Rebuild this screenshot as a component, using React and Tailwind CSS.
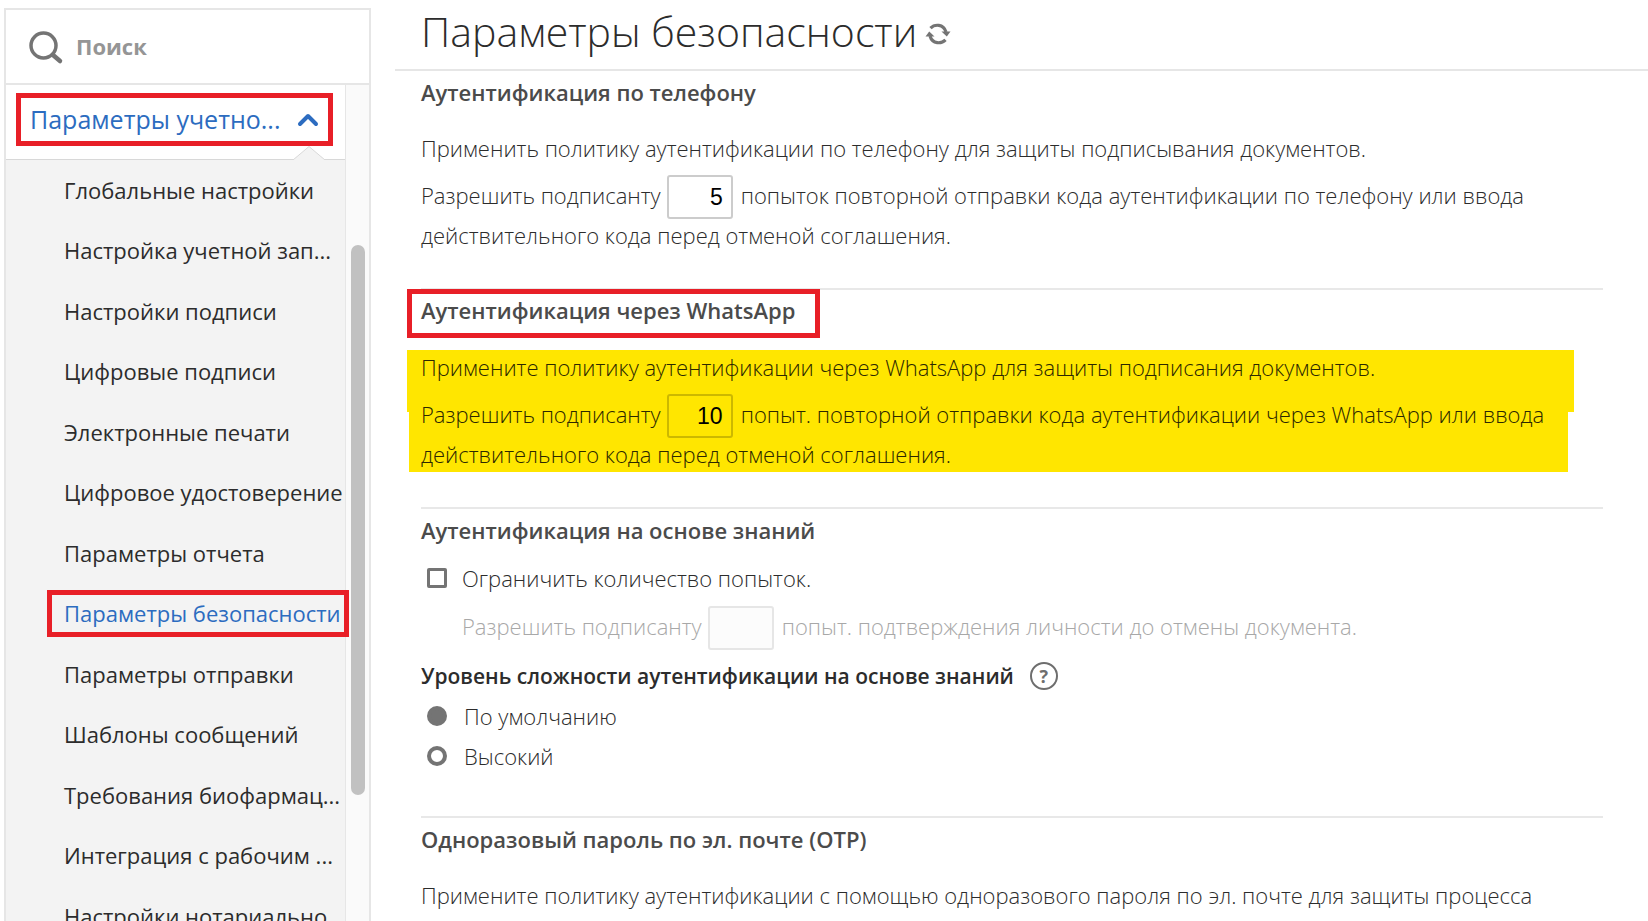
import React from 'react';
import { ChevronUp } from 'lucide-react';

const menuItems = [
  'Глобальные настройки',
  'Настройка учетной зап...',
  'Настройки подписи',
  'Цифровые подписи',
  'Электронные печати',
  'Цифровое удостоверение',
  'Параметры отчета',
  'Параметры безопасности',
  'Параметры отправки',
  'Шаблоны сообщений',
  'Требования биофармац...',
  'Интеграция с рабочим ...',
  'Настройки нотариально...',
];

const activeItem = 'Параметры безопасности';

const SearchIcon = () => (
  <svg className="size-9 shrink-0" viewBox="0 0 36 36" fill="none" stroke="#747474" aria-hidden="true">
    <circle cx="15.5" cy="16.5" r="12.5" strokeWidth="3.5" />
    <path d="M25 26 L32 32" strokeWidth="4.5" strokeLinecap="round" />
  </svg>
);

const RefreshIcon = () => (
  <svg className="h-[22px] w-[26px]" viewBox="0 0 26 22" fill="none" stroke="#747474" strokeWidth="3.2" aria-hidden="true">
    <path d="M5.5 5.2 C9.5 1 18.5 0.5 21 9" />
    <path d="M20.5 16.8 C16.5 21 7.5 21.5 5 13" />
    <path d="M16.5 8.5 L25.5 8.5 L21.8 13.5 Z" fill="#747474" stroke="none" />
    <path d="M9.5 13.5 L0.5 13.5 L4.2 8.5 Z" fill="#747474" stroke="none" />
  </svg>
);

const Sidebar = () => {
  return (
    <aside className="mt-2 ml-1 flex w-[367px] shrink-0 flex-col border-2 border-b-0 border-[#e6e6e6]">
      <label className="flex h-[75px] shrink-0 items-center gap-3 border-b-2 border-[#e6e6e6] pl-[22px]">
        <SearchIcon />
        <input
          type="search"
          aria-label="Поиск"
          placeholder="Поиск"
          className="w-full min-w-0 text-[22px] font-bold outline-none placeholder:text-[#959595]"
        />
      </label>

      <div className="flex min-h-0 flex-1">
        <nav className="min-w-0 flex-1 bg-[#f3f3f3]">
          <div className="relative h-[75px] border-b border-[#d8d8d8] bg-white pt-2 pl-[10px]">
            <button className="flex h-[53px] w-[317px] items-center justify-between border-[5px] border-[#e81f27] pr-1 pl-[9px] text-[25px] text-[#2c6cc0]">
              Параметры учетно...
              <ChevronUp className="size-8" strokeWidth={3} />
            </button>
            <svg className="absolute right-5 -bottom-px h-[14px] w-8" viewBox="0 0 32 14" aria-hidden="true">
              <path d="M0 14 L16 0.5 L32 14" fill="#f3f3f3" stroke="#d8d8d8" />
            </svg>
          </div>

          <ul className="text-[22px] text-[#2c2c2c]">
            {menuItems.map((item) => (
              <li key={item} className="flex h-[60px] items-center whitespace-nowrap even:h-[61px]">
                {item === activeItem ? (
                  <a
                    href="#"
                    aria-current="page"
                    className="relative ml-[41px] flex h-[47px] w-[302px] shrink-0 items-center border-[5px] border-[#e81f27] pl-3 text-[#2c6cc0]"
                  >
                    {item}
                  </a>
                ) : (
                  <a href="#" className="pl-[58px]">
                    {item}
                  </a>
                )}
              </li>
            ))}
          </ul>
        </nav>

        <div className="flex w-6 shrink-0 justify-center border-l border-[#e6e6e6] bg-[#fafafa] pt-40">
          <div className="h-[550px] w-[14px] rounded-full bg-[#c1c1c1]" />
        </div>
      </div>
    </aside>
  );
};

const Section = ({ title, marked, children }) => (
  <section className="relative border-b-2 border-[#e8e8e8] last:border-b-0">
    <h2 className="flex h-[41px] items-center text-[22px] font-semibold text-[#4b4b4b]">
      {marked ? (
        <span className="-mt-px -ml-[14px] flex h-[49px] items-center self-start border-[5px] border-[#e81f27] pr-5 pb-2 pl-[9px]">
          {title}
        </span>
      ) : (
        title
      )}
    </h2>
    {children}
  </section>
);

const CountInput = (props) => (
  <input
    type="text"
    className="-mt-1.5 mr-2 -mb-1 ml-1.5 h-11 w-[66px] rounded-[3px] border-2 border-black/20 bg-transparent pr-2 text-right align-middle font-['Liberation_Sans',sans-serif] text-[23px] font-normal text-black disabled:border-[#e6e6e6] disabled:bg-[#fcfcfc]"
    {...props}
  />
);

const radioClass = 'size-5 appearance-none rounded-full border-4 border-[#747474] checked:bg-[#747474]';

const App = () => {
  return (
    <div className="flex h-screen overflow-hidden bg-white font-['Open_Sans','Noto_Sans',sans-serif]">
      <Sidebar />

      <main className="ml-6 min-w-0 flex-1">
        <header className="flex h-[71px] items-center gap-2 border-b-2 border-[#e6e6e6] pb-1.5 pl-[26px]">
          <h1 className="text-[41px] leading-none font-light text-[#2c2c2c]">Параметры безопасности</h1>
          <button aria-label="Обновить" className="pt-1">
            <RefreshIcon />
          </button>
        </header>

        <div className="mr-[45px] ml-[26px] text-[22px] leading-10 font-light text-[#2c2c2c]">
          <Section title="Аутентификация по телефону">
            <p className="mt-4">Применить политику аутентификации по телефону для защиты подписывания документов.</p>
            <p className="mt-[7px] mb-[33px]">
              Разрешить подписанту
              <CountInput aria-label="Количество попыток по телефону" defaultValue="5" />
              попыток повторной отправки кода аутентификации по телефону или ввода действительного кода перед отменой
              соглашения.
            </p>
          </Section>

          <Section title="Аутентификация через WhatsApp" marked>
            <div className="absolute top-[60px] right-[29px] -left-[14px] h-[62px] bg-[#ffe600]" />
            <div className="absolute top-[122px] right-[35px] -left-3 h-[60px] bg-[#ffe600]" />
            <div className="relative text-[#2c2800]">
              <p className="mt-4">Примените политику аутентификации через WhatsApp для защиты подписания документов.</p>
              <p className="mt-[7px] mb-[33px]">
                Разрешить подписанту
                <CountInput aria-label="Количество попыток через WhatsApp" defaultValue="10" />
                попыт. повторной отправки кода аутентификации через WhatsApp или ввода действительного кода перед отменой
                соглашения.
              </p>
            </div>
          </Section>

          <Section title="Аутентификация на основе знаний">
            <label className="mt-2 flex items-center gap-[15px] pl-[6px]">
              <input type="checkbox" className="size-5 appearance-none rounded-[2px] border-[3px] border-[#747474]" />
              Ограничить количество попыток.
            </label>
            <p className="mt-2 pl-[41px] text-[#a8a8a8]">
              Разрешить подписанту
              <CountInput aria-label="Количество попыток подтверждения личности" disabled />
              попыт. подтверждения личности до отмены документа.
            </p>
            <fieldset className="mt-2.5 mb-10">
              <legend className="flex items-center gap-4 text-[21px] font-semibold text-[#2c2c2c]">
                Уровень сложности аутентификации на основе знаний
                <button
                  aria-label="Справка"
                  className="flex size-7 items-center justify-center rounded-full border-2 border-[#6e6e6e] text-lg font-bold text-[#6e6e6e]"
                >
                  ?
                </button>
              </legend>
              <label className="flex items-center gap-[17px] pl-[6px]">
                <input type="radio" name="level" defaultChecked className={radioClass} />
                По умолчанию
              </label>
              <label className="flex items-center gap-[17px] pl-[6px]">
                <input type="radio" name="level" className={radioClass} />
                Высокий
              </label>
            </fieldset>
          </Section>

          <Section title="Одноразовый пароль по эл. почте (OTP)">
            <p className="mt-4">
              Примените политику аутентификации с помощью одноразового пароля по эл. почте для защиты процесса
            </p>
          </Section>
        </div>
      </main>
    </div>
  );
};

export default App;
